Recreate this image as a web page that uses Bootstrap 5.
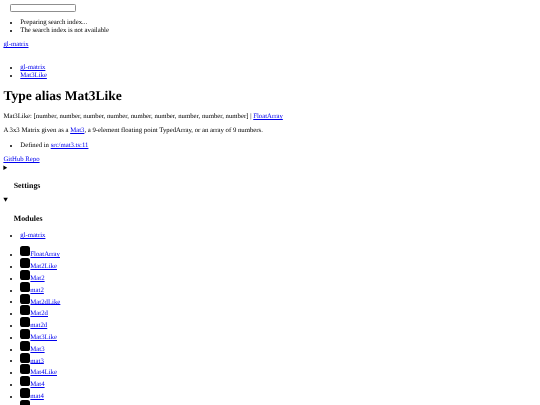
<!DOCTYPE html>
<html lang="en">
<head>
<meta charset="utf-8">
<title>Mat3Like | gl-matrix</title>
<link href="https://cdn.jsdelivr.net/npm/bootstrap@5.3.0/dist/css/bootstrap.min.css" rel="stylesheet">
<style>
html { overflow: hidden; }
body { margin: 0; padding: 3.5px 3.4px; font: 6.75px/7.6px "Liberation Serif", "Times New Roman", serif; color: #000; background: #fff; text-rendering: geometricPrecision; filter: blur(0.4px); }
a { color: #0000ee; text-decoration: underline; }
p, ul { margin: 6.75px 0; }
ul { padding-left: 16.875px; }
h1 { font: bold 13.5px/15.6px "Liberation Serif", serif; margin: 9.05px 0; }
h3 { font: bold 7.9px/8.86px "Liberation Serif", serif; margin: 7.9px 0; padding-left: 10.3px; }
.search-box { height: 8.86px; padding-left: 6.75px; }
.search-box input { display: block; width: 66.2px; height: 8.86px; padding: 0; border: 1px solid #8f8f8f; border-radius: 1.3px; background: #fff; }
.crumb-gap { height: 8.86px; }
summary { display: list-item; padding-top: 1.2px; }
.sum-settings h3 { margin-top: 9.28px; margin-bottom: 5.37px; }
.sum-modules h3 { margin-top: 10.55px; }
.mod-top { margin-top: 5.06px; }
.mod-list { margin-top: 3.2px; }
.mod-list li { height: 11.81px; }
.sq-icon { display: inline-block; width: 10.1px; height: 10.1px; vertical-align: baseline; margin-bottom: -0.4px; }
</style>
</head>
<body>
<div class="search-box"><input type="text" aria-label="Search"></div>
<ul>
<li>Preparing search index...</li>
<li>The search index is not available</li>
</ul>
<a href="#">gl-matrix</a>
<div class="crumb-gap"></div>
<ul>
<li><a href="#">gl-matrix</a></li>
<li><a href="#">Mat3Like</a></li>
</ul>
<h1>Type alias Mat3Like</h1>
<p>Mat3Like: [number, number, number, number, number, number, number, number, number] | <a href="#">FloatArray</a></p>
<p>A 3x3 Matrix given as a <a href="#">Mat3</a>, a 9-element floating point TypedArray, or an array of 9 numbers.</p>
<ul>
<li>Defined in <a href="#">src/mat3.ts:11</a></li>
</ul>
<a href="#">GitHub Repo</a>
<details><summary class="sum-settings"><h3>Settings</h3></summary></details>
<details open><summary class="sum-modules"><h3>Modules</h3></summary>
<ul class="mod-top">
<li><a href="#">gl-matrix</a></li>
</ul>
<ul class="mod-list">
<li><svg class="sq-icon" viewBox="0 0 24 24"><rect width="24" height="24" rx="6"/></svg><a href="#">FloatArray</a></li>
<li><svg class="sq-icon" viewBox="0 0 24 24"><rect width="24" height="24" rx="6"/></svg><a href="#">Mat2Like</a></li>
<li><svg class="sq-icon" viewBox="0 0 24 24"><rect width="24" height="24" rx="6"/></svg><a href="#">Mat2</a></li>
<li><svg class="sq-icon" viewBox="0 0 24 24"><rect width="24" height="24" rx="6"/></svg><a href="#">mat2</a></li>
<li><svg class="sq-icon" viewBox="0 0 24 24"><rect width="24" height="24" rx="6"/></svg><a href="#">Mat2dLike</a></li>
<li><svg class="sq-icon" viewBox="0 0 24 24"><rect width="24" height="24" rx="6"/></svg><a href="#">Mat2d</a></li>
<li><svg class="sq-icon" viewBox="0 0 24 24"><rect width="24" height="24" rx="6"/></svg><a href="#">mat2d</a></li>
<li><svg class="sq-icon" viewBox="0 0 24 24"><rect width="24" height="24" rx="6"/></svg><a href="#">Mat3Like</a></li>
<li><svg class="sq-icon" viewBox="0 0 24 24"><rect width="24" height="24" rx="6"/></svg><a href="#">Mat3</a></li>
<li><svg class="sq-icon" viewBox="0 0 24 24"><rect width="24" height="24" rx="6"/></svg><a href="#">mat3</a></li>
<li><svg class="sq-icon" viewBox="0 0 24 24"><rect width="24" height="24" rx="6"/></svg><a href="#">Mat4Like</a></li>
<li><svg class="sq-icon" viewBox="0 0 24 24"><rect width="24" height="24" rx="6"/></svg><a href="#">Mat4</a></li>
<li><svg class="sq-icon" viewBox="0 0 24 24"><rect width="24" height="24" rx="6"/></svg><a href="#">mat4</a></li>
<li><svg class="sq-icon" viewBox="0 0 24 24"><rect width="24" height="24" rx="6"/></svg><a href="#">QuatLike</a></li>
</ul>
</details>
<script src="https://cdn.jsdelivr.net/npm/bootstrap@5.3.0/dist/js/bootstrap.bundle.min.js"></script>
</body>
</html>
